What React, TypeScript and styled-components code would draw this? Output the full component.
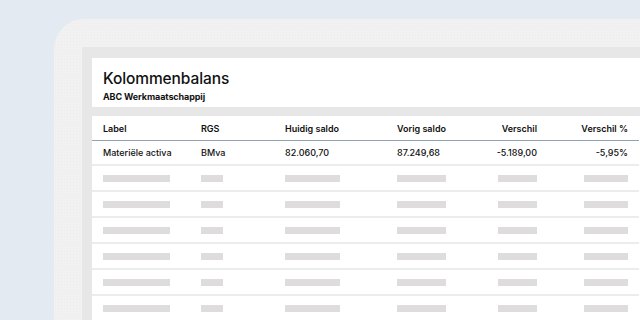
import React from "react";
import styled, { createGlobalStyle } from "styled-components";

const Global = createGlobalStyle`
  html, body { margin: 0; padding: 0; }
  body {
    background: #e3eaf1;
    font-family: Inter, "Noto Sans", "Liberation Sans", sans-serif;
    color: #111;
    width: 640px;
    height: 320px;
    overflow: hidden;
  }
`;

const Page = styled.div`
  width: 640px;
  height: 320px;
  padding: 19px 0 0 54px;
  box-sizing: border-box;
  overflow: hidden;
`;

const Device = styled.div`
  background-color: #f1f1f1;
  background-image: radial-gradient(#ececec 0.6px, transparent 0.7px);
  background-size: 3px 3px;
  border-top-left-radius: 30px;
  padding: 28px 0 0 28px;
  height: 100%;
  box-sizing: border-box;
`;

const Screen = styled.div`
  background: #e7e7e7;
  padding: 11px 0 0 10px;
  height: 100%;
  box-sizing: border-box;
  display: flex;
  flex-direction: column;
  gap: 9px;
`;

const HeaderCard = styled.div`
  background: #fff;
  height: 49px;
  flex: none;
  padding: 12px 0 0 11px;
  box-sizing: border-box;
`;

const Title = styled.h1`
  margin: 0;
  font-size: 15.5px;
  font-weight: 500;
  line-height: 18px;
  letter-spacing: -0.1px;
`;

const Subtitle = styled.div`
  margin-top: 3px;
  font-size: 9px;
  font-weight: 700;
  line-height: 11px;
  letter-spacing: -0.1px;
`;

const Table = styled.div`
  background: #fff;
  flex: 1;
  padding: 0 1px 0 11px;
`;

const Row = styled.div<{ $head?: boolean; $h: number }>`
  display: grid;
  grid-template-columns: 98px 84px 112px 70px 70px 91px;
  align-items: center;
  height: ${(p) => p.$h}px;
  box-sizing: border-box;
  margin-left: -11px;
  padding-left: 11px;
  border-bottom: ${(p) => (p.$head ? "1px solid #8fa4b9" : "2px solid #ececec")};
  font-size: 9px;
  font-weight: ${(p) => (p.$head ? 600 : 500)};
`;

const Cell = styled.div<{ $right?: boolean }>`
  white-space: nowrap;
  display: flex;
  justify-content: ${(p) => (p.$right ? "flex-end" : "flex-start")};
`;

const Bar = styled.div<{ $w: number }>`
  width: ${(p) => p.$w}px;
  height: 7px;
  background: #dedcdd;
`;

const cols = [
  { head: "Label", value: "Materiële activa", bar: 67 },
  { head: "RGS", value: "BMva", bar: 22 },
  { head: "Huidig saldo", value: "82.060,70", bar: 55 },
  { head: "Vorig saldo", value: "87.249,68", bar: 49 },
  { head: "Verschil", value: "-5.189,00", bar: 39, right: true },
  { head: "Verschil %", value: "-5,95%", bar: 44, right: true },
];

export default function App() {
  return (
    <>
      <Global />
      <Page>
        <Device>
          <Screen>
            <HeaderCard>
              <Title>Kolommenbalans</Title>
              <Subtitle>ABC Werkmaatschappij</Subtitle>
            </HeaderCard>
            <Table>
              <Row $head $h={25}>
                {cols.map((c) => (
                  <Cell key={c.head} $right={c.right}>{c.head}</Cell>
                ))}
              </Row>
              <Row $h={25}>
                {cols.map((c) => (
                  <Cell key={c.head} $right={c.right}>{c.value}</Cell>
                ))}
              </Row>
              {[0, 1, 2, 3, 4, 5].map((i) => (
                <Row key={i} $h={26}>
                  {cols.map((c) => (
                    <Cell key={c.head} $right={c.right}>
                      <Bar $w={c.bar} />
                    </Cell>
                  ))}
                </Row>
              ))}
            </Table>
          </Screen>
        </Device>
      </Page>
    </>
  );
}
